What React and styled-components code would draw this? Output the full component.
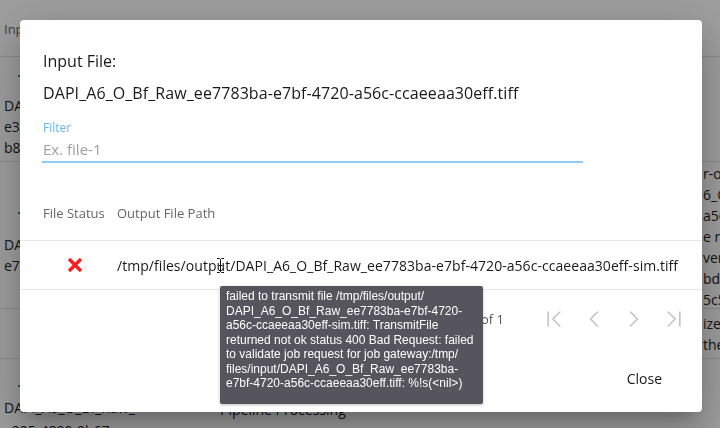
import React from 'react';
import styled, { createGlobalStyle } from 'styled-components';
import { ChevronFirst, ChevronLast, ChevronLeft, ChevronRight } from 'lucide-react';

const GlobalStyle = createGlobalStyle`
  html, body {
    margin: 0;
    padding: 0;
    width: 720px;
    height: 428px;
    overflow: hidden;
    background: #fff;
    font-family: "Open Sans", "Noto Sans", sans-serif;
  }
`;

const Page = styled.div`
  width: 720px;
  height: 428px;
  overflow: hidden;
  color: #222;
  font-size: 14px;
`;

const PageHeader = styled.div`
  height: 56px;
  border-bottom: 1px solid #e0e0e0;
  padding-left: 4px;
  line-height: 58px;
  color: #666;
  font-size: 13px;
`;

const PageRow = styled.div`
  display: grid;
  grid-template-columns: 216px 487px 1fr;
  height: ${(p) => p.$h}px;
  border-bottom: 1px solid #e0e0e0;
  line-height: 21px;
  overflow: hidden;
`;

const LeftCell = styled.div`
  padding-left: ${(p) => (p.$shift ? 0 : 4)}px;
  margin-left: ${(p) => (p.$shift ? -8 : 0)}px;
  padding-top: ${(p) => p.$top || 0}px;
  white-space: nowrap;
`;

const Marker = styled.span`
  display: block;
  width: 6px;
  height: 2px;
  margin: 0 0 0 14px;
  background: #1e88e5;
`;

const MidCell = styled.div`
  padding-left: 4px;
  padding-top: ${(p) => p.$top || 0}px;
  white-space: nowrap;
`;

const RightCell = styled.div`
  padding-top: ${(p) => p.$top || 0}px;
  white-space: nowrap;
`;

const Line = styled.div`
  margin-top: ${(p) => p.$mt || 0}px;
`;

const Overlay = styled.div`
  position: fixed;
  inset: 0;
  background: rgba(0, 0, 0, 0.38);
  padding: 20px 18px 16px 20px;
  box-sizing: border-box;
`;

const Dialog = styled.div`
  position: relative;
  width: 682px;
  height: 392px;
  background: #fff;
  border-radius: 4px;
  box-shadow: 0 11px 15px -7px rgba(0, 0, 0, 0.2), 0 24px 38px 3px rgba(0, 0, 0, 0.14),
    0 9px 46px 8px rgba(0, 0, 0, 0.12);
  display: flex;
  flex-direction: column;
  color: #1a1a1a;
`;

const Content = styled.div`
  padding: 30px 23px 0 23px;
`;

const Title = styled.div`
  font-size: 16px;
  line-height: 22px;
`;

const FileName = styled.div`
  font-size: 16px;
  line-height: 22px;
  margin-top: 10px;
  letter-spacing: 0.08px;
`;

const Field = styled.div`
  width: 541px;
  margin-top: 16px;
  margin-left: -1px;
`;

const Label = styled.div`
  font-size: 12px;
  line-height: 16px;
  color: #64b5f6;
  padding-left: 1px;
`;

const Input = styled.input`
  display: block;
  width: 100%;
  box-sizing: border-box;
  border: none;
  border-bottom: 2px solid #90caf9;
  outline: none;
  font-family: inherit;
  font-size: 15px;
  line-height: 20px;
  padding: 3px 0 2px 1px;
  color: #1a1a1a;
  background: transparent;

  &::placeholder {
    color: #9e9e9e;
  }
`;

const Table = styled.div`
  margin-top: 25px;
`;

const TableRow = styled.div`
  display: grid;
  grid-template-columns: 87px 1fr;
  height: ${(p) => p.$h}px;
  align-items: center;
  border-bottom: 1px solid #e6e6e6;
`;

const HeadCell = styled.div`
  font-size: 13px;
  color: #666;
  padding-left: ${(p) => p.$pl}px;
  padding-top: 3px;
  align-self: start;
  line-height: 44px;
  white-space: nowrap;
`;

const StatusCell = styled.div`
  padding-left: 23px;
  width: 64px;
  display: flex;
  justify-content: center;
`;

const PathCell = styled.div`
  font-size: 14px;
  letter-spacing: 0.05px;
  padding-left: 10px;
  white-space: nowrap;
  position: relative;
`;

const Pagination = styled.div`
  display: flex;
  align-items: center;
  justify-content: flex-end;
  height: 58px;
  padding-right: 8px;
  font-size: 13px;
  color: #555;
`;

const PageInfo = styled.span`
  margin-right: 30px;
`;

const PageButton = styled.span`
  width: 40px;
  display: flex;
  justify-content: center;
  color: #c4c4c4;
`;

const Actions = styled.div`
  display: flex;
  justify-content: flex-end;
  padding: 13px 30px 0 0;
`;

const CloseButton = styled.button`
  border: none;
  background: transparent;
  font-family: inherit;
  font-size: 14px;
  color: #1a1a1a;
  padding: 8px 10px;
`;

const Tooltip = styled.div`
  position: absolute;
  left: 200px;
  top: 266px;
  width: 263px;
  box-sizing: border-box;
  padding: 3px 6px 13px 6px;
  background: #56545c;
  color: #fff;
  border-radius: 2px;
  font-family: "Liberation Sans", Arial, sans-serif;
  font-size: 12px;
  line-height: 14.5px;
  box-shadow: 0 1px 3px rgba(0, 0, 0, 0.25);
`;

const TipLine = styled.div`
  white-space: nowrap;
`;

const Cursor = styled.svg`
  position: absolute;
  left: 109px;
  top: 1px;
`;

const XIcon = () => (
  <svg width="16" height="16" viewBox="0 0 16 16">
    <path d="M2 2L14 14M14 2L2 14" stroke="#ff1a1a" strokeWidth="3.2" />
  </svg>
);

const tipLines = [
  'failed to transmit file /tmp/files/output/',
  'DAPI_A6_O_Bf_Raw_ee7783ba-e7bf-4720-',
  'a56c-ccaeeaa30eff-sim.tiff: TransmitFile',
  'returned not ok status 400 Bad Request: failed',
  'to validate job request for job gateway:/tmp/',
  'files/input/DAPI_A6_O_Bf_Raw_ee7783ba-',
  'e7bf-4720-a56c-ccaeeaa30eff.tiff: %!s(<nil>)',
];

export default function App() {
  return (
    <>
      <GlobalStyle />
      <Page>
        <PageHeader>Input File</PageHeader>
        <PageRow $h={104}>
          <LeftCell $top={18}>
            <Marker />
            <Line $mt={18}>DAPI_A6_O_Bf_Raw_</Line>
            <Line>e3a1c2d4-77a0-4b1e-</Line>
            <Line>b8f0-2c91aa55d310.tiff</Line>
          </LeftCell>
          <MidCell />
          <RightCell />
        </PageRow>
        <PageRow $h={146}>
          <LeftCell $top={50}>
            <Marker />
            <Line $mt={20}>DAPI_A6_O_Bf_Raw_</Line>
            <Line>e7783ba-e7bf-4720.tiff</Line>
          </LeftCell>
          <MidCell />
          <RightCell $top={1}>
            <Line>r-out</Line>
            <Line>6_O_B</Line>
            <Line>a56c-</Line>
            <Line>e req</Line>
            <Line>ver</Line>
            <Line>bd0e7</Line>
            <Line>5c5f1</Line>
          </RightCell>
        </PageRow>
        <PageRow $h={49}>
          <LeftCell $top={14} $shift>
            <Line>d</Line>
          </LeftCell>
          <MidCell />
          <RightCell $top={4}>
            <Line>ize</Line>
            <Line>the</Line>
          </RightCell>
        </PageRow>
        <PageRow $h={80}>
          <LeftCell $top={26}>
            <Marker />
            <Line $mt={10}>DAPI_A6_O_Bf_Raw_</Line>
            <Line $mt={2}>e225-4890-9b67</Line>
          </LeftCell>
          <MidCell $top={40}>Pipeline Processing</MidCell>
          <RightCell />
        </PageRow>
      </Page>
      <Overlay>
        <Dialog>
          <Content>
            <Title>Input File:</Title>
            <FileName>DAPI_A6_O_Bf_Raw_ee7783ba-e7bf-4720-a56c-ccaeeaa30eff.tiff</FileName>
            <Field>
              <Label>Filter</Label>
              <Input placeholder="Ex. file-1" />
            </Field>
          </Content>
          <Table>
            <TableRow $h={52}>
              <HeadCell $pl={23}>File Status</HeadCell>
              <HeadCell $pl={10}>Output File Path</HeadCell>
            </TableRow>
            <TableRow $h={48}>
              <StatusCell>
                <XIcon />
              </StatusCell>
              <PathCell>
                /tmp/files/output/DAPI_A6_O_Bf_Raw_ee7783ba-e7bf-4720-a56c-ccaeeaa30eff-sim.tiff
                <Cursor width="9" height="17" viewBox="0 0 9 17">
                  <path
                    d="M1 1.5h2.5L4.5 2.5L5.5 1.5H8M4.5 2.5V14.5M1 15.5h2.5L4.5 14.5L5.5 15.5H8M2.5 8.5h4"
                    stroke="#111"
                    strokeWidth="1"
                    fill="none"
                  />
                </Cursor>
              </PathCell>
            </TableRow>
          </Table>
          <Pagination>
            <PageInfo>Page 1 of 1</PageInfo>
            <PageButton>
              <ChevronFirst size={28} strokeWidth={1.4} />
            </PageButton>
            <PageButton>
              <ChevronLeft size={28} strokeWidth={1.4} />
            </PageButton>
            <PageButton>
              <ChevronRight size={28} strokeWidth={1.4} />
            </PageButton>
            <PageButton>
              <ChevronLast size={28} strokeWidth={1.4} />
            </PageButton>
          </Pagination>
          <Actions>
            <CloseButton>Close</CloseButton>
          </Actions>
          <Tooltip>
            {tipLines.map((l) => (
              <TipLine key={l}>{l}</TipLine>
            ))}
          </Tooltip>
        </Dialog>
      </Overlay>
    </>
  );
}
